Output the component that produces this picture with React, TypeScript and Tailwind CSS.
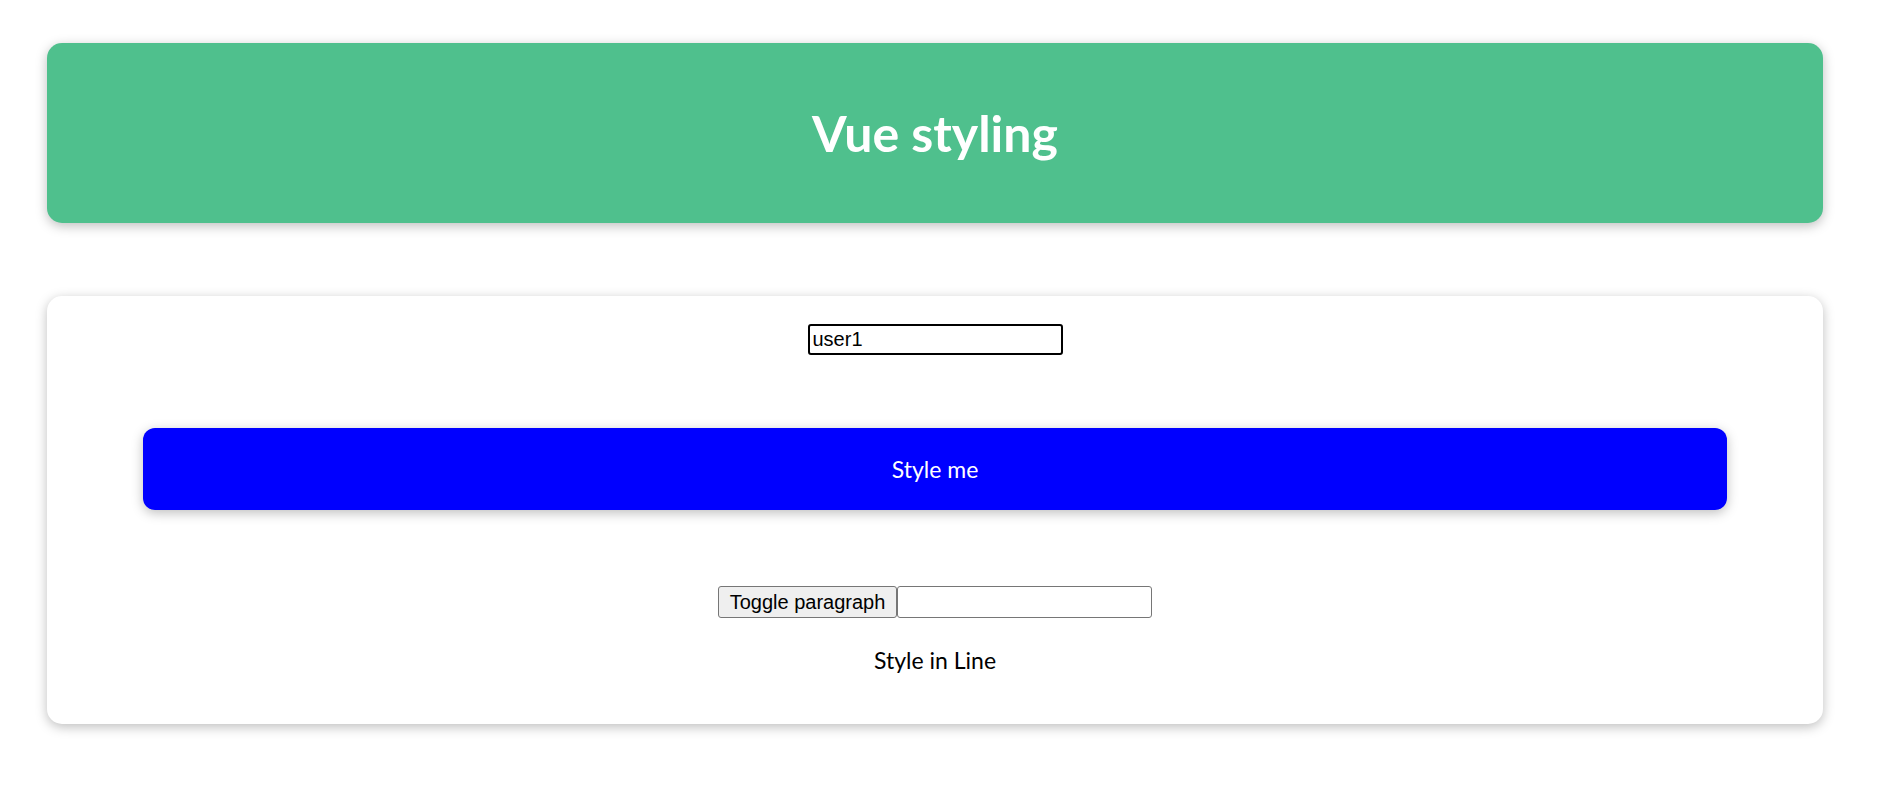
import { useState } from 'react';

export default function App() {
    const [name, setName] = useState('user1');
    const [color, setColor] = useState('');
    const [visible, setVisible] = useState(true);

    return (
        <div className="min-h-screen bg-white pt-[43px] font-['Lato',sans-serif]">
            {/* Header */}
            <header className="mx-[47px] flex h-[180px] w-[1776px] items-center justify-center rounded-[15px] bg-[#4fc08d] shadow-[0_3px_12px_rgba(0,0,0,0.26)]">
                <h1 className="text-[50px] font-bold text-white">Vue styling</h1>
            </header>

            {/* Content card */}
            <section className="mx-[47px] mt-[73px] flex h-[428px] w-[1776px] flex-col items-center rounded-[15px] bg-white pt-[28px] shadow-[0_3px_12px_rgba(0,0,0,0.26)]">
                <input
                    type="text"
                    autoFocus
                    value={name}
                    onChange={(e) => setName(e.target.value)}
                    className="h-[31px] w-[255px] rounded-[3px] border-2 border-black px-[3px] font-['Liberation_Sans',Arial,sans-serif] text-[20px] text-black outline-none"
                />
                <div className="mt-[73px] flex h-[82px] w-[1584px] items-center justify-center rounded-[12px] bg-[#0000ff] text-[23px] text-white shadow-[0_3px_12px_rgba(0,0,0,0.26)]">
                    Style me
                </div>
                <div className="mt-[76px] flex h-[32px] items-stretch font-['Liberation_Sans',Arial,sans-serif] text-[20px] text-black">
                    <button
                        onClick={() => setVisible(!visible)}
                        className="w-[179px] rounded-[3px] border border-[#767676] bg-[#efefef] leading-none"
                    >
                        Toggle paragraph
                    </button>
                    <input
                        type="text"
                        value={color}
                        onChange={(e) => setColor(e.target.value)}
                        className="w-[255px] rounded-[3px] border border-[#767676] px-[3px] outline-none"
                    />
                </div>
                {visible && <p className="mt-[24px] text-[23px] leading-[36px] text-black">Style in Line</p>}
            </section>
        </div>
    );
}
